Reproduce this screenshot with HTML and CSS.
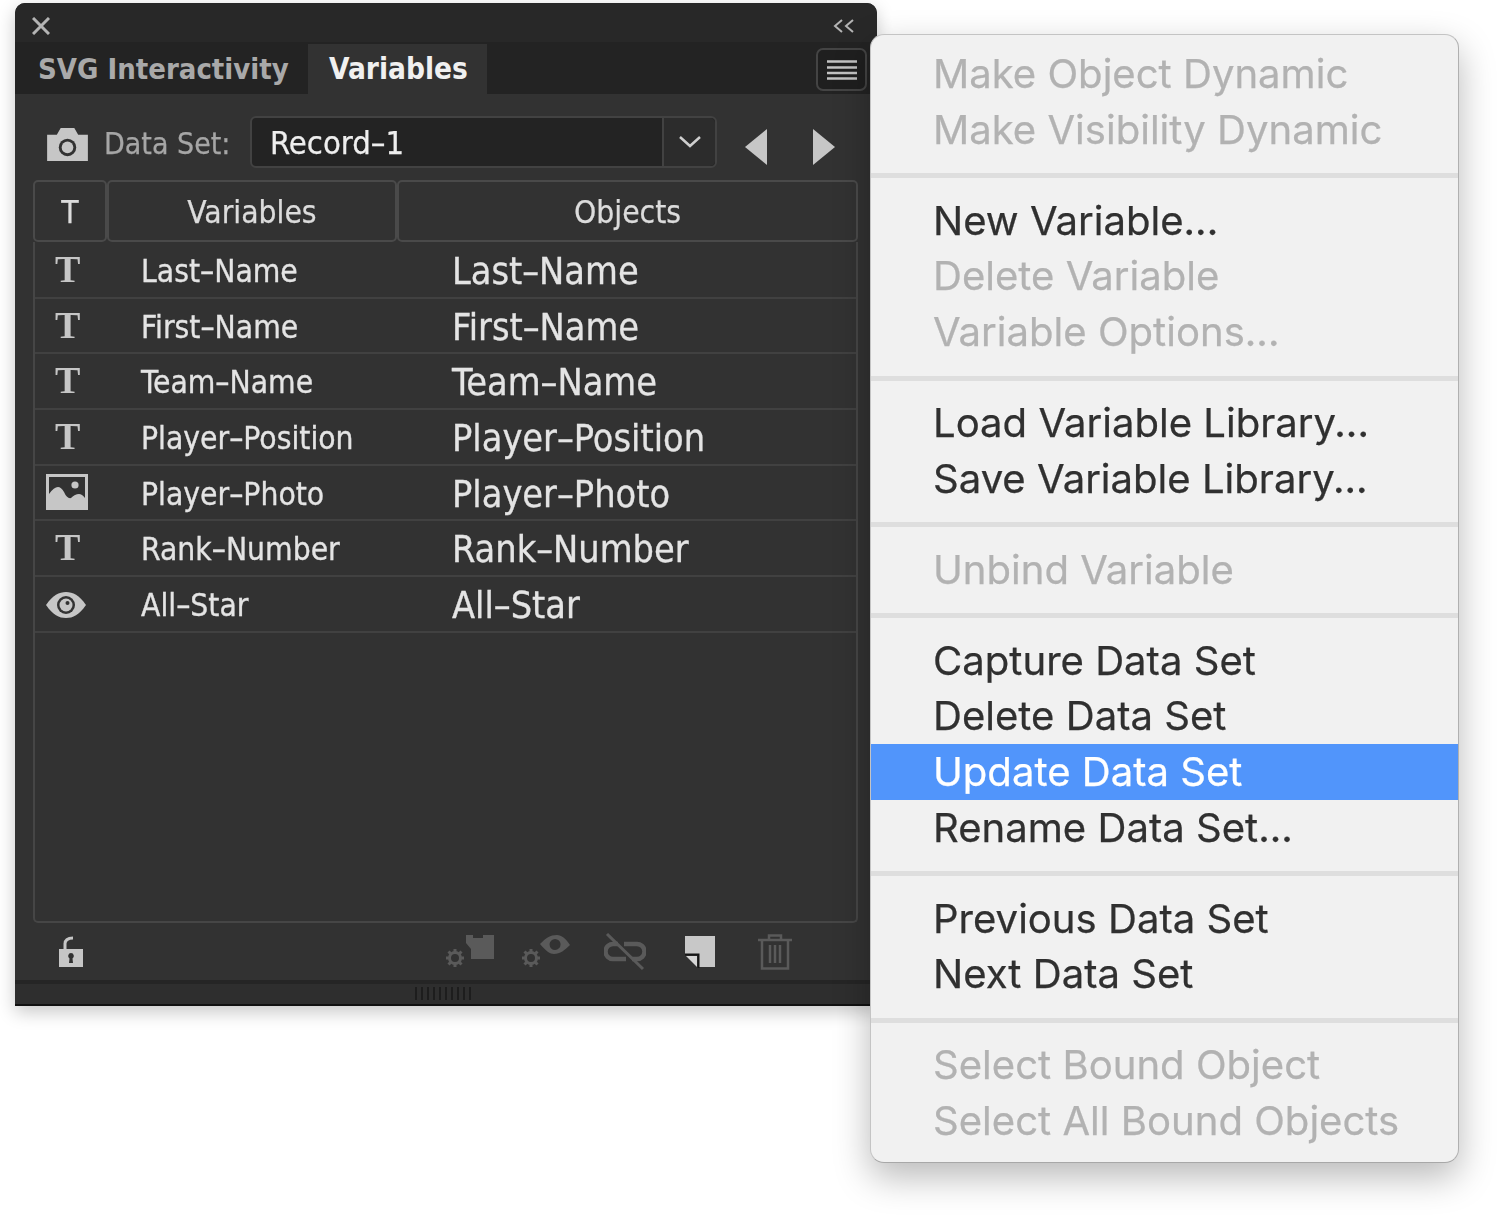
FILE: index.html
```html
<!DOCTYPE html>
<html lang="en">
<head>
<meta charset="utf-8">
<title>Variables panel</title>
<link rel="stylesheet" href="styles.css">
</head>
<body>
<div class="stage">
  <section class="panel">
    <header class="titlebar">
      <svg class="ic-close" viewBox="0 0 18 18"><path d="M1 1L17 17M17 1L1 17"/></svg>
      <svg class="ic-collapse" viewBox="0 0 22 14"><path d="M9 1L2 7L9 13M20 1L13 7L20 13"/></svg>
    </header>
    <nav class="tabs">
      <div class="tab">SVG Interactivity</div>
      <div class="tab tab-active">Variables</div>
      <button class="menu-btn"><svg class="ic-lines" viewBox="0 0 30 20"><path d="M0 1.5H30M0 7.5H30M0 13H30M0 18.5H30"/></svg></button>
    </nav>
    <div class="toolbar">
      <svg class="ic-camera" viewBox="0 0 42 34"><path class="fill" d="M0 7H10L14 0H28L32 7H42V34H0Z"/><circle class="hole" cx="21" cy="20" r="9"/><circle class="fill" cx="21" cy="20" r="6"/></svg>
      <span class="ds-label">Data Set:</span>
      <div class="select">
        <span class="select-value">Record–1</span>
        <span class="select-btn"><svg class="ic-chevron" viewBox="0 0 22 12"><path d="M1 1L11 10L21 1"/></svg></span>
      </div>
      <svg class="ic-arrow" viewBox="0 0 22 36"><path class="fill" d="M22 0V36L0 18Z"/></svg>
      <svg class="ic-arrow ic-arrow-next" viewBox="0 0 22 36"><path class="fill" d="M0 0V36L22 18Z"/></svg>
    </div>
    <div class="thead">
      <div class="th">T</div>
      <div class="th">Variables</div>
      <div class="th">Objects</div>
    </div>
    <div class="tbody">
      <div class="row"><span class="ty-t">T</span><span class="vname">Last–Name</span><span class="oname">Last–Name</span></div>
      <div class="row"><span class="ty-t">T</span><span class="vname">First–Name</span><span class="oname">First–Name</span></div>
      <div class="row"><span class="ty-t">T</span><span class="vname">Team–Name</span><span class="oname">Team–Name</span></div>
      <div class="row"><span class="ty-t">T</span><span class="vname">Player–Position</span><span class="oname">Player–Position</span></div>
      <div class="row">
        <svg class="ic-image" viewBox="0 0 42 36"><path class="fill" fill-rule="evenodd" d="M0 0H42V36H0ZM3 3V20Q8 13 12 13Q15 13 18 18Q21 25 25 24Q29 20 33 20Q36 20 39 24V3Z"/><circle class="fill" cx="29" cy="11" r="3.6"/></svg>
        <span class="vname">Player–Photo</span><span class="oname">Player–Photo</span>
      </div>
      <div class="row"><span class="ty-t">T</span><span class="vname">Rank–Number</span><span class="oname">Rank–Number</span></div>
      <div class="row">
        <svg class="ic-eye" viewBox="0 0 40 26"><path class="fill" d="M0 13C7 3 13 0 20 0S33 3 40 13C33 23 27 26 20 26S7 23 0 13Z"/><circle class="hole" cx="20" cy="13" r="9"/><circle class="fill" cx="20" cy="13" r="6.5"/><circle class="hole" cx="21.5" cy="11" r="2"/></svg>
        <span class="vname">All–Star</span><span class="oname">All–Star</span>
      </div>
    </div>
    <footer class="footer">
      <svg class="ic-lock" viewBox="0 0 26 32"><path class="lock-arc" d="M7 14V8C7 4 10 2 15 2"/><path class="fill" fill-rule="evenodd" d="M1 13H25V31H1ZM13 17A3 3 0 0 0 11.5 22.5L11 27H15L14.500 22.500A3 3 0 0 0 13 17Z"/></svg>
      <svg class="ic-dim" width="50" height="34" viewBox="0 0 50 34"><path class="dim-fill" d="M22 8V0H29V3H39V0H50V24H27V14Z"/><g class="dim-gear"><path d="M11 14V32M2 23H20M4.500 16.500L17.500 29.500M17.500 16.500L4.500 29.500"/><circle class="gear-core" cx="11" cy="23" r="5.500"/></g></svg>
      <svg class="ic-dim" width="50" height="34" viewBox="0 0 50 34"><path class="dim-fill" fill-rule="evenodd" d="M20 9C26 3 30 0 37 0C42 0 46 4 50 10C45 15 40 19 34 19C30 19 26 16 20 9ZM35 4A5.500 5.500 0 1 0 35.100 15A5.500 5.500 0 1 0 35 4Z"/><g class="dim-gear"><path d="M11 14V32M2 23H20M4.500 16.500L17.500 29.500M17.500 16.500L4.500 29.500"/><circle class="gear-core" cx="11" cy="23" r="5.500"/></g></svg>
      <svg class="ic-dim" width="42" height="38" viewBox="0 0 42 38"><g class="dim-link"><path d="M14 11H9A7.500 7.500 0 0 0 9 26H22"/><path d="M20 11H33A7.500 7.500 0 0 1 33 26H28"/><path class="dim-slash" d="M3 1L39 36"/></g></svg>
      <svg class="ic-page" viewBox="0 0 32 34"><path class="page-fill" d="M1 1H31V32H15V19H1Z"/><path class="page-corner" d="M2 21H13V32Z"/><path class="page-line" d="M1 19.500H14.500V33"/></svg>
      <svg class="ic-dim" width="34" height="36" viewBox="0 0 34 36"><g class="dim-line"><path d="M0 6H34M11 5V1.500H23V5M4 6V34.500H30V6M12 11V29M17 11V29M22 11V29"/></g></svg>
    </footer>
    <div class="grip"><span class="grip-lines"></span></div>
  </section>

  <aside class="menu">
    <div class="mi off">Make Object Dynamic</div>
    <div class="mi off">Make Visibility Dynamic</div>
    <div class="sep"></div>
    <div class="mi">New Variable...</div>
    <div class="mi off">Delete Variable</div>
    <div class="mi off">Variable Options...</div>
    <div class="sep"></div>
    <div class="mi">Load Variable Library...</div>
    <div class="mi">Save Variable Library...</div>
    <div class="sep"></div>
    <div class="mi off">Unbind Variable</div>
    <div class="sep"></div>
    <div class="mi">Capture Data Set</div>
    <div class="mi">Delete Data Set</div>
    <div class="mi on">Update Data Set</div>
    <div class="mi">Rename Data Set...</div>
    <div class="sep"></div>
    <div class="mi">Previous Data Set</div>
    <div class="mi">Next Data Set</div>
    <div class="sep"></div>
    <div class="mi off">Select Bound Object</div>
    <div class="mi off">Select All Bound Objects</div>
  </aside>
</div>
</body>
</html>
```
FILE: styles.css
```css
* { box-sizing: border-box; }
html, body { margin: 0; background: #fff; }
.stage { position: relative; width: 1500px; height: 1216px; overflow: hidden; padding: 3px 0 0 15px; filter: blur(0.5px); }

.fill { fill: #c6c6c6; }
.hole { fill: #323232; }

.panel {
  width: 862px; height: 1003px; background: #323232; border-radius: 10px 10px 0 0;
  box-shadow: 0 6px 18px rgba(0,0,0,.22); display: flex; flex-direction: column;
  font-family: "DejaVu Sans", sans-serif; font-stretch: condensed; border-bottom: 2px solid #111;
}
.titlebar { height: 39px; flex: none; background: #282828; border-radius: 10px 10px 0 0; display: flex; align-items: center; justify-content: space-between; padding: 6px 22px 0 17px; }
.ic-close { width: 18px; height: 18px; fill: none; stroke: #b4b4b4; stroke-width: 3; }
.ic-collapse { width: 22px; height: 14px; fill: none; stroke: #b4b4b4; stroke-width: 2; }

.tabs { height: 52px; flex: none; background: #232323; display: flex; align-items: stretch; padding-right: 10px; }
.tab { width: 293px; padding: 1px 0 0 23px; display: flex; align-items: center; font-size: 29px; font-weight: bold; color: #a9a9a9; white-space: nowrap; }
.tab-active { width: 179px; margin-top: 2px; padding: 0 0 0 21px; background: #323232; color: #f0f0f0; font-size: 29.500px; }
.menu-btn { margin: 6px 0 3px auto; width: 51px; background: #1f1f1f; border: 2px solid #444; border-radius: 7px; display: flex; align-items: center; justify-content: center; padding: 0; }
.ic-lines { width: 30px; height: 20px; fill: none; stroke: #c2c2c2; stroke-width: 2.400; }

.toolbar { height: 86px; flex: none; display: flex; align-items: flex-start; padding: 22px 0 0 32px; }
.ic-camera { width: 41px; height: 33px; margin: 12px 16px 0 0; flex: none; }
.ds-label { width: 146px; flex: none; line-height: 56px; font-size: 30px; color: #a6a6a6; white-space: nowrap; -webkit-text-stroke: 0.25px #a6a6a6; }
.select { width: 467px; height: 52px; flex: none; background: #232323; border: 2px solid #424242; border-radius: 6px; display: flex; align-items: center; justify-content: space-between; }
.select-value { padding: 2px 0 0 18px; font-size: 32.500px; color: #eee; -webkit-text-stroke: 0.25px #eee; }
.select-btn { width: 53px; height: 100%; background: #2c2c2c; border-left: 2px solid #424242; border-radius: 0 5px 5px 0; display: flex; align-items: center; justify-content: center; }
.ic-chevron { width: 22px; height: 12px; fill: none; stroke: #cfcfcf; stroke-width: 2.500; }
.ic-arrow { width: 22px; height: 36px; margin: 13px 0 0 28px; flex: none; }
.ic-arrow-next { margin-left: 46px; }

.thead { height: 62px; flex: none; margin: 0 19px 0 18px; display: grid; grid-template-columns: 74px 290px 1fr; }
.th { border: 2px solid #4a4a4a; border-radius: 5px; padding-top: 2px; display: flex; align-items: center; justify-content: center; font-size: 31.500px; color: #dcdcdc; -webkit-text-stroke: 0.25px #dcdcdc; }

.tbody { height: 681px; flex: none; margin: 0 19px 0 18px; padding-top: 1px; border: 2px solid #464646; border-top: 0; border-radius: 0 0 5px 5px; }
.row { height: 55.700px; display: grid; grid-template-columns: 106px 311px 1fr; align-items: center; border-bottom: 2px solid #414141; }
.ty-t { justify-self: start; margin-left: 20px; margin-top: -2px; font-family: "Liberation Serif", serif; font-weight: bold; font-size: 38px; line-height: 40px; color: #c6c6c6; }
.ic-image { width: 42px; height: 36px; margin-left: 11px; margin-top: -2px; }
.ic-eye { width: 40px; height: 26px; margin-left: 11px; margin-top: 2px; }
.vname { font-size: 31.500px; color: #e4e4e4; white-space: nowrap; margin-top: 2px; -webkit-text-stroke: 0.3px #e4e4e4; }
.oname { font-size: 37.500px; color: #e4e4e4; white-space: nowrap; margin-top: 2px; -webkit-text-stroke: 0.3px #e4e4e4; }

.footer { height: 57px; flex: none; display: grid; grid-template-columns: 429px 76px 84px 80px 74px auto; align-items: center; justify-content: start; }
.ic-lock { width: 26px; height: 32px; margin-left: 43px; }
.lock-arc { fill: none; stroke: #c6c6c6; stroke-width: 3; }
.dim-fill { fill: #5a5a5a; }
.dim-gear { fill: none; stroke: #5a5a5a; stroke-width: 3; }
.gear-core { fill: #323232; }
.dim-link { fill: none; stroke: #5a5a5a; stroke-width: 4.500; }
.dim-slash { stroke-width: 3; }
.dim-line { fill: none; stroke: #5a5a5a; stroke-width: 2.500; }
.ic-page { width: 32px; height: 34px; }
.page-fill { fill: #c8c8c8; }
.page-corner { fill: #d6d6d6; }
.page-line { fill: none; stroke: #161616; stroke-width: 2; }

.grip { flex: 1; background: #2e2e2e; border-top: 4px solid #252525; display: flex; justify-content: center; padding-top: 3px; }
.grip-lines { width: 56px; height: 13px; margin-right: 6px; background: repeating-linear-gradient(90deg, #1d1d1d 0 2px, transparent 2px 6px); }

.menu {
  position: absolute; left: 870px; top: 34px; width: 589px; height: 1129px; padding: 11px 0 13px;
  background: #f1f1f1; border: 1px solid #c4c4c4; border-bottom-color: #a8a8a8; border-right-color: #b0b0b0; border-radius: 14px;
  box-shadow: 0 14px 36px rgba(0,0,0,.28); font-family: Inter, "Liberation Sans", sans-serif;
}
.mi { height: 55.700px; padding: 0 0 1px 62px; display: flex; align-items: center; font-size: 40.100px; color: #303030; white-space: nowrap; -webkit-text-stroke: 0.25px currentColor; }
.off { color: #b2b2b2; }
.on { background: #5195fb; color: #fff; }
.sep { height: 35.300px; display: flex; }
.sep::before { content: ""; flex: 1; height: 5px; margin-top: 16px; background: #dedede; }
```
